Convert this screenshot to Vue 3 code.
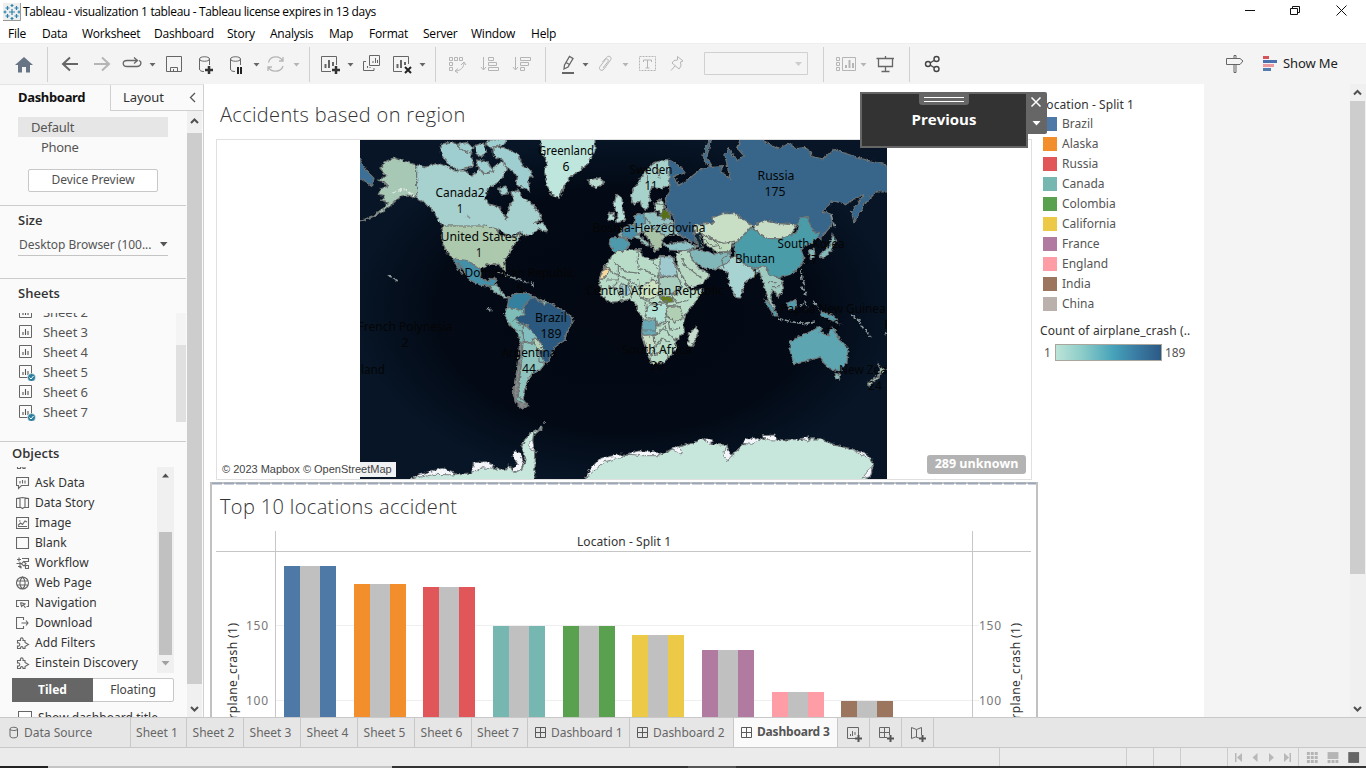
<script setup>
const menus = ['File', 'Data', 'Worksheet', 'Dashboard', 'Story', 'Analysis', 'Map', 'Format', 'Server', 'Window', 'Help']
const sheets = [
  { name: 'Sheet 2' }, { name: 'Sheet 3' }, { name: 'Sheet 4' },
  { name: 'Sheet 5', used: true }, { name: 'Sheet 6' }, { name: 'Sheet 7', used: true }
]
const objects = ['Extension', 'Ask Data', 'Data Story', 'Image', 'Blank', 'Workflow', 'Web Page', 'Navigation', 'Download', 'Add Filters', 'Einstein Discovery']
const puzzle = 'M1.500 12.500V10C4.500 11 4.500 6 1.500 7V4.500H4.500C3.500 1 8 1 7 4.500H9V6.500L12.500 8.500 9 10.500V12.500H7C7.500 10 4 10 4.500 12.500Z'
const objectPaths = {
  'Extension': puzzle,
  'Ask Data': 'M.5 1.500H12.500V9.500H5.500L2.500 12.500V9.500H.5Z M4 7.500V5 M6.500 7.500V4 M9 7.500V4.500',
  'Data Story': 'M.5 2.500L6.500 1.500 12.500 2.500V11.500H8L6.500 12.500 5 11.500H.5Z M4 2V11 M9 2V11',
  'Image': 'M.5 1.500H12.500V12.500H.5Z M2 9.500L4.500 7 6.500 8.500 9 5 11 6 M3 5H4.500 M2 10.500H11',
  'Blank': 'M.5 1.500H12.500V12.500H.5Z',
  'Workflow': 'M1 3.500H5 M3 1.500V5.500 M6 2.500H12.500V5.500H8 M.5 7.500H5.500 M2 10.500H5V12.500 M4 6V12 M7.500 5.500L5.500 8 8 10 10 7.500Z M9.500 9.500H12.500V12.500H9.500Z',
  'Web Page': 'M6.500 1A6 6 0 1 0 6.500 13 6 6 0 1 0 6.500 1Z M6.500 1C3 4 3 10 6.500 13 10 10 10 4 6.500 1 M1 5H12 M1 9H12',
  'Navigation': 'M3 10.500H.5V4.500H12.500V10.500H10.500 M4.500 6.500L9 8 7.500 9 9.500 12 M4.500 6.500L5.500 10.500 7 9',
  'Download': 'M7.500 4V1.500H.5V12.500H7.500V10 M5.500 7H12 M10 4.500L12 7 10 9.500',
  'Add Filters': puzzle,
  'Einstein Discovery': puzzle
}
const legend = [
  ['Brazil', 'c1'], ['Alaska', 'c2'], ['Russia', 'c3'], ['Canada', 'c4'], ['Colombia', 'c5'],
  ['California', 'c6'], ['France', 'c7'], ['England', 'c8'], ['India', 'c9'], ['China', 'c10']
]
const bars = [
  { x: 284, y: 566, c: '#4e79a7' }, { x: 354, y: 584, c: '#f28e2b' }, { x: 423, y: 587, c: '#e15759' },
  { x: 493, y: 626, c: '#76b7b2' }, { x: 563, y: 626, c: '#59a14f' }, { x: 632, y: 635, c: '#edc948' },
  { x: 702, y: 650, c: '#b07aa1' }, { x: 772, y: 692, c: '#ff9da7' }, { x: 841, y: 701, c: '#9c755f' }
]
const tabs = ['Sheet 1', 'Sheet 2', 'Sheet 3', 'Sheet 4', 'Sheet 5', 'Sheet 6', 'Sheet 7']

// [text, centre x, baseline y, width]
const mapLabels = [
  ['Greenland', 566, 155, 56], ['6', 566, 171, 7], ['Canada2', 460, 197, 49], ['1', 460, 213, 6],
  ['United States', 479, 241, 77], ['1', 479, 257, 6], ['Dominican Republic', 520, 277, 111], ['5', 520, 293, 7],
  ['Sweden', 651, 174, 43], ['11', 651, 190, 13], ['Russia', 776, 180, 37], ['175', 775, 196, 21],
  ['Bosnia-Herzegovina', 649, 232, 113], ['1', 649, 248, 6], ['South Korea', 811, 248, 67], ['17', 811, 264, 14],
  ['Bhutan', 755, 263, 40], ['1', 755, 278, 6], ['Central African Republic', 655, 295, 138], ['3', 655, 311, 7],
  ['Papua New Guinea', 833, 313, 105], ['20', 833, 329, 14], ['French Polynesia', 405, 331, 95], ['2', 405, 347, 7],
  ['Brazil', 551, 322, 32], ['189', 551, 338, 21], ['Argentina', 529, 357, 55], ['44', 529, 373, 14],
  ['South Africa', 657, 354, 70], ['20', 657, 370, 14], ['New Zealand', 875, 374, 72], ['24', 875, 390, 14],
  ['land', 373, 374, 24], ['Fiji', 893, 329, 18]
]
// Land shapes, drawn on a grid of three units per pixel: [outline, fill]
const land = [
  // North America
  ['M75 100L90 80 118 68 150 80 185 90 185 190 160 180 142 182 125 195 105 213 80 232 50 247 18 258 52 242 85 220 103 203 80 196 90 182 70 178 78 160 98 154 85 140 68 135 95 122Z', '#a7c8b4'],
  ['M185 90L212 96 250 85 280 97 300 108 330 108 350 123 375 102 400 118 418 94 438 80 456 95 448 121 430 142 400 160 390 190 400 206 430 215 444 236 454 254 462 216 476 196 468 174 490 164 505 192 520 196 540 216 553 235 560 254 540 265 570 267 575 290 550 282 530 300 510 302 495 290 475 306 450 296 430 285 400 276 268 273 250 258 240 235 213 205 185 190Z', '#a6d1ce'],
  ['M262 273H395L425 282 438 305 450 300 480 306 500 292 490 315 472 335 465 355 450 374 446 386 452 408 440 400 432 388 400 388 377 401 357 394 335 378 300 375 275 350 262 320Z', '#acc9ad'],
  ['M295 372L335 376 357 390 374 401 378 425 395 440 418 427 426 437 408 455 375 450 343 436 326 405 308 384 324 418 309 400Z', '#4590a9'],
  ['M404 452L424 449 438 470 462 489 448 489 420 473Z', '#8bbfba'],
  ['M258 28L290 20 312 34 346 48 356 94 312 107 285 91 260 62Z', '#9eced0'],
  ['M305 28L335 22 354 37 350 55 325 47Z', '#9eced0'],
  ['M360 32L385 24 395 50 382 65 363 58Z', '#9eced0'],
  ['M405 12H455L450 26 412 40 392 28Z', '#9eced0'],
  ['M414 35L450 38 489 58 505 93 528 105 534 125 520 130 524 170 500 156 483 151 488 125 465 103 450 93 443 75 415 62Z', '#9eced0'],
  ['M365 75L398 80 415 109 385 116 367 94Z', '#9eced0'],
  ['M430 160L455 155 463 175 440 180Z', '#9eced0'],
  ['M555 0H720V48L700 85 665 113 642 128 626 157 612 190 591 180 576 151 569 112 576 82 560 50Z', '#bfe6dc'],
  ['M700 135L736 128 746 145 725 158 705 152Z', '#b9d9cf'],
  ['M5 56L35 108 57 130 50 151 30 138 5 128Z', '#3d6f96'],
  // South America
  ['M455 520L463 490 485 472 520 476 560 495 582 508 605 515 650 545 654 560 635 590 630 615 600 635 590 660 570 685 555 705 530 717 515 745 507 770 505 795 520 812 500 820 482 804 475 775 480 735 490 685 496 625 489 595 462 567 448 537Z', '#7fbdb9'],
  ['M460 492L485 472 520 476 555 494 560 510 510 510 500 530 480 520 458 518Z', '#357f9f'],
  ['M510 510L528 487 562 500 568 512 580 502 605 515 650 545 654 560 635 590 630 615 600 635 577 686 560 667 551 648 556 620 530 596 516 570 490 566 484 547 507 536Z', '#2a587e'],
  ['M505 565L530 590 548 612 532 625 505 619Z', '#83bfc0'],
  ['M532 612L550 614 568 645 555 650 538 632Z', '#b2d2b5'],
  ['M504 622L535 625 551 648 552 680 570 685 555 705 530 717 515 745 507 770 505 795 490 785 493 735 500 680Z', '#8fc4bf'],
  ['M498 620L502 660 492 730 487 795 520 813 497 818 480 800 478 750 490 690 493 625Z', '#858a8c'],
  // Africa
  ['M733 431L745 400 770 364 790 346 855 344 862 363 890 375 917 364 955 375 970 405 990 440 1003 465 1045 462 1020 502 992 540 985 565 988 591 960 618 965 637 940 670 920 686 890 685 880 665 860 605 862 575 866 555 845 520 842 502 820 493 790 500 760 502 738 480Z', '#b8dcc7'],
  ['M733 431L747 398H765L757 417 742 433Z', '#f6d79d'],
  ['M915 365H953L968 423H915Z', '#9ecad0'],
  ['M915 425H968L982 455 965 480 915 475Z', '#a9cebf'],
  ['M855 460L893 432 912 450 910 480 885 493 855 487Z', '#cee3c0'],
  ['M913 482L952 486 955 500 930 503 915 490Z', '#667d1e'],
  ['M800 445L820 455 828 475 805 487 795 468Z', '#9ac7ce'],
  ['M880 510L936 507 932 558 904 571 900 550 870 548Z', '#b3e1d6'],
  ['M863 555H902L904 600H860Z', '#68a9b5'],
  ['M936 517L975 515 985 550 958 561 935 544Z', '#b1d0b3'],
  ['M862 604L898 602 900 640 890 660 879 650Z', '#c8ddc3'],
  ['M1000 600L1024 575 1029 595 1011 635 998 632Z', '#c5dbcc'],
  // Europe
  ['M765 309L805 307 828 327 805 349 777 350 763 330Z', '#5099ad'],
  ['M785 178L801 190 803 228 812 255 782 261 790 232 775 215Z M762 235L778 232 775 257 760 255Z', '#b4ded7'],
  ['M830 198L830 170 857 132 876 102 902 82 936 73 948 95 942 150 917 161 890 157 881 178 886 196 874 226 859 213 855 197 838 209Z', '#a7d2cc'],
  ['M790 300L803 279 836 269 842 242 870 235 900 231 914 246 949 252 963 286 981 306 955 299 929 305 915 322 889 305 865 291 850 299 876 320 895 334 875 332 850 310 826 307 814 314Z', '#93c2c3'],
  ['M798 292L815 275 838 271 848 300 828 312 805 308Z', '#488faa'],
  ['M838 242L865 235 872 265 842 276Z', '#5b9fb4'],
  ['M900 205L920 192 929 215 922 234 901 227Z', '#b7d9c7'],
  ['M912 237L935 221 948 245 925 255Z', '#547018'],
  ['M865 290L890 280 928 300 918 338 900 350 893 331Z', '#a8c3a5'],
  ['M925 327L988 320 1028 334 1000 348 943 345Z', '#8dc2c7'],
  // Asia
  ['M940 73L975 94 990 113 958 122 970 151 995 137 1016 120 1035 105 1070 94 1105 92 1095 109 1125 130 1110 61 1120 39 1143 75 1168 63 1145 39 1162 0H1190L1270 42 1298 24 1325 41 1355 37 1372 65 1405 72 1435 43 1495 63 1535 75 1610 94V171L1565 170 1535 200 1497 262 1489 229 1528 177 1490 197 1470 207 1436 198 1404 229 1429 238 1430 270 1397 311 1378 302 1347 247 1325 270 1265 265 1236 255 1195 271 1180 265 1140 236 1106 235 1075 245 1075 265 1020 270 1015 300 1028 329 985 305 960 286 958 251 935 219 931 190 945 170Z', '#37658a'],
  ['M1065 5L1044 60 1050 83 1072 94 1055 66 1070 10Z', '#3c6e91'],
  ['M1018 270L1075 265V247L1106 235 1140 236 1192 272 1170 295 1155 320 1107 327 1075 315 1045 300 1022 300Z', '#c8dfc6'],
  ['M1195 271L1236 255 1265 265 1325 270 1305 305 1275 312 1235 310 1202 286Z', '#c7ddc6'],
  ['M1137 330L1170 295 1188 277 1205 290 1235 310 1275 312 1325 292 1335 250 1355 245 1375 290 1397 294 1370 325 1337 340 1347 370 1340 390 1315 415 1275 428 1240 420 1235 396 1195 400 1165 385 1140 360Z', '#4b9ca9'],
  ['M1040 297L1075 315 1107 325 1137 319 1126 350 1085 351 1047 325Z', '#bfdbbe'],
  ['M1003 344L1040 345 1080 356 1125 351 1129 379 1085 405 1045 399 1010 374Z', '#82b7ba'],
  ['M960 354L1000 345 1012 375 1037 405 1067 416 1045 444 1009 459 990 440 970 400Z', '#b9d9c5'],
  ['M1083 400L1115 385 1141 359 1165 385 1195 400 1235 395 1230 420 1210 411 1195 425 1171 440 1157 489 1143 488 1124 449 1116 411Z', '#a7d4d3'],
  ['M1210 399L1232 393 1242 420 1275 430 1286 460 1270 486 1258 470 1250 464 1246 488 1260 520 1249 524 1233 472Z', '#9fcac0'],
  ['M1015 298L1037 291 1035 311 1045 338 1031 341 1028 319Z', '#0a2636'],
  ['M1390 360L1420 340 1434 299 1442 315 1430 346 1402 370Z M1360 345L1377 342 1380 365 1366 372Z', '#84b9bb'],
  ['M1227 495L1240 498 1270 543 1258 543Z M1296 505L1323 493 1325 518 1302 525Z M1395 527L1436 542 1455 567 1424 554 1400 543Z', '#529dad'],
  // Oceania
  ['M1305 620L1340 600 1365 590 1387 575 1402 580 1395 592 1420 602 1430 575 1445 596 1454 613 1480 640 1476 681 1455 707 1430 704 1407 685 1395 667 1365 675 1317 686 1305 647Z', '#5ca5b1'],
  ['M1440 715L1457 719 1453 735 1443 732Z', '#84b8ba'],
  ['M1565 681L1582 702 1592 704 1575 716 1568 731 1539 756 1538 745 1567 724 1575 702Z', '#a5c8bd'],
  // Antarctica
  ['M165 1045V1032L240 1012 280 1018 350 1014 355 985 395 985 418 1000 450 1005 462 990 477 1012 500 1002 513 975 500 931 524 897 563 878 535 902 532 925 542 955 538 1045Z M695 1045V1032L705 1010 732 975 795 962 855 956 916 959 960 938 1015 924 1040 910 1077 928 1116 930 1122 965 1145 948 1168 925 1230 910 1297 915 1355 912 1395 911 1445 932 1500 944 1542 967 1555 985 1549 1014 1535 1032V1045Z', '#c7e6dc']
]
const borders = 'M748 400L820 435 850 455 M775 378L810 410 855 415 M850 345L846 375 850 400 870 405 905 425 M892 375L910 405V475 M790 440L775 455 M755 435L790 435 V390 M760 455L785 460 800 500 M820 440L835 470 825 495 M850 430L856 485 890 505 935 500 M870 500L875 530 M980 455L950 480 965 505 1000 495 M935 510L980 515 M910 575L940 560 945 585 975 580 M905 600L930 575 940 595 960 618 M900 640L920 610 945 620 M885 665L925 645 942 668 M860 585H905 M876 102L878 140 M905 85L912 130 M900 205L930 210 M870 245L895 280 M950 265L915 270 890 285 M975 360L990 390 1040 430 M1010 375L1035 390 M1045 310L1075 335 1095 330 M1060 300L1100 340 M1128 350L1100 375 1107 400 M1165 390L1205 404 M1242 440L1265 440 M1250 455L1275 455 M465 565L480 550 M485 585L500 590'
const islands = 'M430 413L465 425 503 438 535 447 M537 445V465 M335 240L345 250 M1270 551L1310 560 1350 566 1382 558 M1335 515L1350 500 1355 520 M1375 500L1390 515 M1490 540L1510 555 1525 580 M1533 585L1545 605 M1590 600L1596 592 M1338 400L1340 430 1350 455 M1340 455L1355 475 1345 480 M395 520L410 525 M98 418L125 438 M535 890L560 877 M565 865L572 862 M1428 240L1440 280 M1597 12L1590 28'
const relief = 'M115 175L135 163 155 166 180 185'
const iceShelves = 'M165 1032L190 1020 240 1005 262 1000 295 1010 300 1020 240 1018Z M350 1008L358 983 392 980 415 990 410 1002 380 998 360 1010Z M470 960L482 948 497 955 505 980 500 1000 485 1012 470 1005 490 985Z M518 930L533 915 538 950 528 945Z M690 1032L705 1002 735 970 800 957 805 966 750 980 712 1012Z M815 957L850 948 910 950 915 962 860 962Z M950 940L975 938 982 957 965 950Z M1050 910L1075 920 1060 926Z M1104 960L1115 938 1132 962 1118 980Z M1163 925L1175 912 1205 908 1215 915 1190 928Z M1222 902L1260 900 1265 915 1235 914Z M1335 912L1360 905 1362 918Z M1480 942L1535 957 1545 970 1520 960Z M1545 1000L1555 990 1545 1025 1520 1032Z'
</script>

<template>
  <div class="app">
    <header class="titlebar">
      <svg class="logo" width="18" height="18" viewBox="0 0 18 18">
        <path d="M0 0H17V17H0Z" fill="#eee" /><path d="M17.500 0V17.500H0" stroke="#999" fill="none" />
        <path d="M9 6V12 M6 9H12 M9 1V4 M7.500 2.500H10.500 M9 14V17 M7.500 15.500H10.500 M4.500 3V7 M2.500 5H6.500 M13.500 3V7 M11.500 5H15.500 M4.500 11V15 M2.500 13H6.500 M13.500 11V15 M11.500 13H15.500 M2 7.500V10.500 M.5 9H3.500 M16 7.500V10.500 M14.500 9H17" stroke="#2d83ac" stroke-width="1.200" />
      </svg>
      <span class="apptitle">Tableau - visualization 1 tableau - Tableau license expires in 13 days</span>
      <svg class="wincontrols" width="138" height="22" viewBox="1228 0 138 22" fill="none" stroke="#111">
        <path d="M1245 10.500H1255 M1290.500 8.500H1297.500V14.500H1290.500Z M1292.500 8V6.500H1299.500V12.500H1298 M1336.500 5.500L1346.500 15.500 M1346.500 5.500L1336.500 15.500" />
      </svg>
    </header>

    <nav class="menubar"><span v-for="m in menus" :key="m">{{ m }}</span></nav>

    <div class="toolbar">
      <svg width="47" height="41" viewBox="0 43 47 41">
        <path d="M15 65L24 57 33 65H30V72.500H26V67H22V72.500H18V65Z" fill="#667484" />
      </svg>
      <i class="sep"></i>
      <svg width="261" height="41" viewBox="48 43 261 41" class="ic">
        <path class="w2" d="M63 64H78 M70 57.500L63 64 70 70.500" />
        <path class="w2 off" d="M94 64H109 M102 57.500L109 64 102 70.500" />
        <path d="M131 66.500H127C122 66.500 122 60.500 127 60.500H137.500 M134 57.500L137.500 60.500 134 63.500 M139 60.500C142 61.500 141.500 66.500 137 66.500H131" stroke-width="1.300" />
        <path class="tri" d="M149.500 63H155.500L152.500 66.500Z" />
        <path d="M166.500 56.500H181.500V71.500H166.500Z M170.500 71.500V67.500H177.500V71.500 M173.500 71.500V69" />
        <path d="M199.500 59V69C199.500 70.500 201 71.500 204 71.500 M199.500 59C199.500 56 209.500 56 209.500 59 209.500 62 199.500 62 199.500 59 M209.500 59V65" /><path class="w3" d="M209 66V74 M205 70H213" />
        <path d="M230.500 59V69C230.500 70.500 232 71.500 235 71.500 M230.500 59C230.500 56 240.500 56 240.500 59 240.500 62 230.500 62 230.500 59 M240.500 59V65" /><path class="w2 dark" d="M238 67V74 M241 67V74" />
        <path class="tri" d="M253.500 63H259.500L256.500 66.500Z" />
        <path class="off" d="M268.500 62.500C270 55.500 280 55 282.500 61 M279 61H283V57 M283 66C281 72.500 271 73 268.500 67 M272 67H268V71" stroke-width="1.300" />
        <path class="tri tri-off" d="M293.500 63H299.500L296.500 66.500Z" />
      </svg>
      <i class="sep"></i>
      <svg width="125" height="41" viewBox="310 43 125 41" class="ic">
        <path d="M331 71.500H321.500V56.500H336.500V65" /><path class="w2" d="M325.500 68V64 M329 68V60 M333 66V62" /><path class="w3" d="M336 66V74 M332 70H340" />
        <path class="tri" d="M347.500 63H353.500L350.500 66.500Z" />
        <path d="M369.500 55.500H379.500V65.500H369.500Z M366 61.500H363.500V70.500H374V68 M367.500 68V66 M370 68V67 M373 63V61 M375.500 63V58 M377.500 63V60" />
        <path d="M402 71.500H393.500V56.500H408.500V64" /><path class="w2" d="M397.500 68V64 M401 68V60 M405 65V62" /><path class="w2 dark" d="M405 67L411 73 M411 67L405 73" />
        <path class="tri" d="M419.500 63H425.500L422.500 66.500Z" />
      </svg>
      <i class="sep"></i>
      <svg width="109" height="41" viewBox="436 43 109 41" class="ic off">
        <path d="M449.500 57.500H452.500V60.500H449.500Z M454.500 57.500H457.500V60.500H454.500Z M459.500 57.500H462.500V60.500H459.500Z M449.500 62.500H452.500V65.500H449.500Z M449.500 67.500H452.500V70.500H449.500Z M464 62.500C464 67 461 71 455 71 M461 65L464 62 466 65 M458 68.500L455 71 458 73" />
        <path d="M483.500 57V69 M481 67L483.500 70 486 67 M488.500 57.500H493.500V60.500H488.500Z M488.500 62.500H496.500V65.500H488.500Z M488.500 67.500H498.500V70.500H488.500Z" />
        <path d="M515.500 57V69 M513 67L515.500 70 518 67 M520.500 57.500H530.500V60.500H520.500Z M520.500 62.500H528.500V65.500H520.500Z M520.500 67.500H524.500V70.500H520.500Z" />
      </svg>
      <i class="sep"></i>
      <svg width="277" height="41" viewBox="546 43 277 41" class="ic">
        <path d="M564.500 65L569.500 56.500 573 58.500 568 67 564 69Z M566 62.500L569.500 64.500" stroke-width="1.300" /><path class="w2" d="M562 73H574" />
        <path class="tri" d="M582.500 63H588.500L585.500 66.500Z" />
        <path class="off" d="M602.500 62L606.500 57.500C609 54.500 612.500 57.500 610.500 60L604 69C602 72 598 69.500 600 66.500L605.500 59.500C607 58 609 59.500 608 61.500L603 68" />
        <path class="tri tri-off" d="M622.500 63H628.500L625.500 66.500Z" />
        <path class="off" d="M639.500 56.500H655.500V70.500H639.500Z" stroke-dasharray="2 1" /><path class="off" d="M643.500 62V60H651.500V62 M647.500 60V68 M645.500 68H649.500" />
        <path class="off" d="M677.500 56.500L683 61 680.500 62 681 66 679 69 672 63 674 60.500 677.500 60Z M675 66L671 70.500" />
        <path d="M704.500 52.500H807.500V74.500H704.500Z" stroke="#d0d0d0" /><path class="tri tri-off2" d="M795 62H802L798.500 66Z" />
      </svg>
      <i class="sep"></i>
      <svg width="85" height="41" viewBox="824 43 85 41" class="ic">
        <path class="off" d="M836.500 57.500H839.500V60.500H836.500Z M836.500 62.500H839.500V65.500H836.500Z M836.500 67.500H839.500V70.500H836.500Z M842.500 57.500H855.500V70.500H842.500Z" /><path class="off w2" d="M846 68V65 M849.500 68V60 M853 68V63" />
        <path class="tri tri-off" d="M860.500 63H866.500L863.500 66.500Z" />
        <path d="M876.500 58.500H894 M878.500 58V66.500H892.500V58 M885.500 67V71 M881.500 71.500H889.500 M885.500 58V56" stroke-width="1.300" />
      </svg>
      <i class="sep"></i>
      <svg width="45" height="41" viewBox="910 43 45 41" class="ic sh">
        <circle cx="928" cy="64" r="2.500" /><circle cx="936.500" cy="59" r="2.500" /><circle cx="936.500" cy="69" r="2.500" /><path d="M930 63L934 60.500 M930 65L934 67.500" />
      </svg>
      <span class="grow"></span>
      <svg width="58" height="41" viewBox="1224 43 58 41" class="ic guide">
        <path d="M1226.500 58.500H1240L1243 61 1240 64.500H1226.500Z M1234 64.500V72.500H1236V64.500 M1234 58V55.500H1236V58" />
        <path stroke="#d4545c" stroke-width="3" d="M1263 57.500H1269" /><path stroke="#4c6fae" stroke-width="3" d="M1263 61.500H1277" /><path stroke="#ec9a9f" stroke-width="3" d="M1263 65.500H1274" /><path stroke="#527dac" stroke-width="3" d="M1263 69.500H1271" />
      </svg>
      <span class="showme">Show Me</span>
    </div>

    <main class="main">
      <aside class="sidebar">
        <div class="sidetabs"><b>Dashboard</b><span>Layout</span><svg width="17" height="26"><path d="M10 8L5.500 12.500 10 17" fill="none" stroke="#555" stroke-width="1.300" /></svg></div>
        <div class="sidemain">
          <div class="sidecol">
            <div class="devices">
              <div class="device sel">Default</div>
              <div class="device sub">Phone</div>
              <div class="preview">Device Preview</div>
            </div>
            <div class="size">
              <h3>Size</h3>
              <div class="select"><span>Desktop Browser (100...</span><svg width="8" height="5"><path d="M0 0H7.500L3.700 4.500Z" fill="#555" /></svg></div>
            </div>
            <div class="sheets">
              <h3>Sheets</h3>
              <div class="sheetbox">
                <div class="sheetlist">
                  <div v-for="s in sheets" :key="s.name" class="sheet">
                    <svg width="18" height="18" viewBox="0 0 18 18"><path d="M1.500 2.500H13.500V14.500H1.500Z" fill="none" stroke="#666" /><path d="M5 12V9 M7.500 12V6 M10 12V8" stroke="#555" stroke-width="1.100" />
                      <g v-if="s.used"><circle cx="13.500" cy="14.500" r="4" fill="#2e7e9f" stroke="#fafafa" stroke-width=".6" /><path d="M11.500 14.500L13 16 15.500 13" fill="none" stroke="#fff" /></g></svg>
                    <span>{{ s.name }}</span>
                  </div>
                </div>
                <div class="sheetscroll"></div>
              </div>
            </div>
            <div class="objects">
              <h3>Objects</h3>
              <div class="objbox">
                <div class="objlist">
                  <div v-for="o in objects" :key="o" class="object">
                    <svg width="14" height="14" viewBox="0 0 14 14"><path :d="objectPaths[o]" fill="none" stroke="#666" stroke-width="1.100" /></svg><span>{{ o }}</span>
                  </div>
                </div>
                <div class="objscroll"><svg width="17" height="16"><path d="M5 10.500H12L8.500 6.500Z" fill="#505050" /></svg><i></i><svg width="17" height="17"><path d="M4.500 6H12.500L8.500 10.500Z" fill="#a0a0a0" /></svg></div>
              </div>
              <div class="toggle"><b>Tiled</b><span>Floating</span></div>
              <div class="check"><i></i><span>Show dashboard title</span></div>
            </div>
          </div>
          <div class="sidescroll">
            <svg width="15" height="22"><path d="M4 12L7.500 8.500 11 12" fill="none" stroke="#505050" stroke-width="2" /></svg><i></i>
            <svg width="15" height="33"><path d="M4 23L7.500 26.500 11 23" fill="none" stroke="#505050" stroke-width="2" /></svg>
          </div>
        </div>
      </aside>

      <section class="dash">
        <div class="views">
          <h2>Accidents based on region</h2>
          <div class="mapview">
            <svg class="map" width="527" height="339" viewBox="15 15 1581 1017">
              <defs>
                <filter id="coast" x="0" y="0" width="100%" height="100%"><feTurbulence type="fractalNoise" baseFrequency=".09" numOctaves="3" seed="4" /><feDisplacementMap in="SourceGraphic" scale="13" xChannelSelector="R" yChannelSelector="G" /></filter>
                <radialGradient id="sea"><stop offset="0" stop-color="#030812" /><stop offset=".7" stop-color="#030a16" /><stop offset="1" stop-color="#071526" /></radialGradient>
              </defs>
              <path d="M0 0H1620V1050H0Z" fill="url(#sea)" />
              <g filter="url(#coast)">
                <path v-for="(l, i) in land" :key="i" :d="l[0]" :fill="l[1]" stroke="#707473" stroke-width="3.500" />
                <path :d="borders" class="borders" />
                <path :d="islands" class="islands" />
                <path :d="relief" class="relief" />
                <path :d="iceShelves" class="ice" />
              </g>
              <g transform="translate(-1065 -405) scale(3)" class="maplabels">
                <text v-for="(t, i) in mapLabels" :key="i" :x="t[1]" :y="t[2]" :textLength="t[3]" lengthAdjust="spacingAndGlyphs">{{ t[0] }}</text>
              </g>
            </svg>
            <span class="credit">© 2023 Mapbox © OpenStreetMap</span>
            <span class="unknown">289 unknown</span>
          </div>
          <div class="chart">
            <svg width="828" height="235" viewBox="210 482 828 235">
              <path d="M211 720V483H1037V720" fill="none" stroke="#c1c1c1" stroke-width="2" /><path d="M212 483.500H1036" stroke="#9da6b8" stroke-width="2" stroke-dasharray="10 2" />
              <path d="M276 625.500H979 M276 700.500H979" stroke="#efefef" />
              <g v-for="b in bars" :key="b.x"><rect :x="b.x" :y="b.y" width="52" height="160" :fill="b.c" /><rect :x="b.x + 16" :y="b.y" width="20" height="160" fill="#c0c0c0" /></g>
              <path d="M216 551.500H1031 M275.500 531V717 M972.500 531V717" stroke="#c6c6c6" fill="none" />
              <text x="220" y="514" class="ctitle" textLength="237">Top 10 locations accident</text>
              <text x="577" y="546" class="chead" textLength="94">Location - Split 1</text>
              <g class="axis"><text x="246" y="630" textLength="22">150</text><text x="246" y="705" textLength="22">100</text><text x="979" y="630" textLength="22">150</text><text x="979" y="705" textLength="22">100</text></g>
              <g class="chead"><text transform="translate(237 785) rotate(-90)" textLength="162">Count of airplane_crash (1)</text><text transform="translate(1020 785) rotate(-90)" textLength="162">Count of airplane_crash (1)</text></g>
            </svg>
          </div>
        </div>
        <div class="legends">
          <h4>Location - Split 1</h4>
          <div v-for="l in legend" :key="l[0]" class="key"><i :class="l[1]"></i>{{ l[0] }}</div>
          <h4 class="count">Count of airplane_crash (..</h4>
          <div class="ramp"><span>1</span><i></i><span>189</span></div>
        </div>
        <div class="previous">
          <div class="prevbtn"><svg class="grip" width="50" height="12"><path d="M0 0H50V9Q50 12 47 12H3Q0 12 0 9Z" fill="#666" /><path d="M5 4.500H45 M5 8.500H45" stroke="#fff" /></svg>Previous</div>
          <svg width="19" height="42"><path d="M0 0H17Q19 0 19 2V40Q19 42 17 42H0Z" fill="#666" /><path d="M3.500 5.500L12.500 14.500 M12.500 5.500L3.500 14.500" stroke="#fff" stroke-width="1.500" /><path d="M4.500 29H12.500L8.500 33.500Z" fill="#fff" /></svg>
        </div>
      </section>
      <div class="canvas"></div>
      <div class="mainscroll"><svg width="15" height="17"><path d="M4 10.500L7.500 7 11 10.500" fill="none" stroke="#505050" stroke-width="2" /></svg><i></i><span class="grow"></span><svg width="15" height="20"><path d="M4 10L7.500 13.500 11 10" fill="none" stroke="#505050" stroke-width="2" /></svg></div>
    </main>

    <footer class="tabs">
      <div class="tab source"><svg width="10" height="13"><path d="M1 3V10C1 12.500 8.500 12.500 8.500 10V3 M1 3C1 .7 8.500 .7 8.500 3 8.500 5 1 5 1 3" fill="none" stroke="#666" /></svg>Data Source</div>
      <div v-for="t in tabs" :key="t" class="tab sheettab">{{ t }}</div>
      <div v-for="n in 3" :key="n" class="tab dtab" :class="{ active: n === 3 }"><svg width="12" height="12"><path d="M.5 .5H10.500V10.500H.5Z M5.500 .5V10.500 M.5 5.500H10.500" fill="none" stroke="#5a5a5a" /></svg>Dashboard {{ n }}</div>
      <div class="tab add"><svg width="16" height="16"><path d="M8 11.500H.5V.5H11.500V8 M3.500 9V7 M5.500 9V4 M8 8V5" fill="none" stroke="#666" /><path d="M11.500 8V15 M8 11.500H15" stroke="#555" stroke-width="2" /></svg></div>
      <div class="tab add"><svg width="16" height="16"><path d="M8 10.500H.5V.5H10.500V8 M5.500 .5V10.500 M.5 5.500H10.500" fill="none" stroke="#666" /><path d="M11.500 8V15 M8 11.500H15" stroke="#555" stroke-width="2" /></svg></div>
      <div class="tab add"><svg width="16" height="16"><path d="M8 11L4.500 10 .5 11.500V.5L5.500 2.500 10.500 .5V8 M5.500 2.500V10" fill="none" stroke="#666" /><path d="M11.500 8V15 M8 11.500H15" stroke="#555" stroke-width="2" /></svg></div>
    </footer>
    <div class="status">
      <i></i><i></i><i></i><i></i>
      <svg width="70" height="19" viewBox="1228 748 70 19" fill="#b8b8b8"><path d="M1235 753H1236.500V762H1235Z M1242 753V762L1237 757.500Z M1257.500 753V762L1252.500 757.500Z M1269 753V762L1274 757.500Z M1284 753V762L1289 757.500Z M1289.500 753H1291V762H1289.500Z" /></svg>
      <svg class="viewmodes" width="67" height="19" viewBox="1299 748 67 19"><path d="M1307 753.500H1318 M1307 757.500H1318 M1307 761.500H1318" stroke="#b4b4b4" stroke-width="3" stroke-dasharray="3 1" /><path d="M1328 752H1339V759H1328Z" fill="#b4b4b4" /><path d="M1328 761.500H1339" stroke="#b4b4b4" stroke-width="3" stroke-dasharray="3 1" /><path d="M1349 752H1360V763H1349Z" fill="#666" /></svg>
    </div>
    <div class="taskedge"></div>
  </div>
</template>

<style>
html, body { background: #fff; overflow: hidden; }
</style>
<style scoped>
* { box-sizing: border-box; }
.app { width: 1366px; height: 768px; display: flex; flex-direction: column; overflow: hidden; font: 12px "Noto Sans", sans-serif; color: #333; background: #fff; }
svg { display: block; flex: none; }
h2, h3, h4 { margin: 0; }
.grow { flex: 1; }
.titlebar { height: 23px; display: flex; padding-left: 3px; flex: none; }
.logo { margin-top: 3px; }
.apptitle { margin-left: 2px; line-height: 23px; color: #000; font-family: "Open Sans", sans-serif; letter-spacing: -.355px; white-space: nowrap; }
.wincontrols { margin-left: auto; }
.menubar { height: 20px; flex: none; display: grid; grid-template-columns: 34px 40px 72px 73px 43px 59px 40px 54px 48px 60px 40px; padding-left: 8px; line-height: 21px; color: #000; font-family: "Open Sans", sans-serif; letter-spacing: -.22px; }
.toolbar { height: 41px; flex: none; background: #f4f4f4; display: flex; align-items: stretch; border-top: 1px solid #eee; }
.toolbar svg { margin-top: -1px; }
.sep { width: 1px; height: 35px; margin-top: 3px; background: #d0d0d0; flex: none; }
.ic { fill: none; stroke: #666; }
.ic .w2, .w2 { stroke-width: 2; }
.ic .w3 { stroke-width: 2.5; stroke: #333; }
.ic .dark { stroke: #222; }
.ic .off, .off path { stroke: #b5b5b5; }
.ic .tri { fill: #666; stroke: none; }
.ic .tri-off { fill: #b5b5b5; }
.ic .tri-off2 { fill: #ccc; }
.sh { stroke: #444; stroke-width: 1.400; }
.showme { font-size: 13px; line-height: 39px; width: 84px; padding-left: 1px; color: #222; letter-spacing: -.1px; }
.main { height: 633px; flex: none; display: flex; }
.sidebar { width: 204px; background: #fafafa; border-right: 1px solid #d0d0d0; border-top: 1px solid #e4e4e4; flex: none; }
.sidetabs { display: flex; height: 26px; font-size: 13px; line-height: 25px; }
.sidetabs b { width: 110px; padding-left: 18px; color: #111; letter-spacing: -.33px; }
.sidetabs span { width: 75px; border-left: 1px solid #d0d0d0; border-bottom: 1px solid #d0d0d0; padding-left: 12px; letter-spacing: -.1px; }
.sidetabs svg { border-bottom: 1px solid #d0d0d0; width: 18px; }
.sidemain { display: flex; height: 606px; }
.sidecol { width: 187px; overflow: hidden; }
.sidecol h3 { font-size: 13px; font-weight: 600; line-height: 18px; font-family: "Open Sans", sans-serif; }
.devices { height: 95px; padding: 6px 18px 0 18px; border-bottom: 1px solid #ccc; margin-right: 1px; }
.device { height: 20px; line-height: 20px; padding-left: 13px; font-size: 13px; color: #555; letter-spacing: -.2px; }
.device.sel { background: #e6e6e6; }
.device.sub { padding-left: 23px; letter-spacing: -.3px; }
.preview { margin: 12px 10px 0 10px; height: 23px; border: 1px solid #c8c8c8; border-radius: 2px; background: #fff; text-align: center; line-height: 20px; color: #505050; letter-spacing: -.05px; }
.size { height: 73px; padding: 5px 18px 0; border-bottom: 1px solid #ccc; margin-right: 1px; }
.select { display: flex; align-items: center; justify-content: space-between; height: 22px; margin-top: 5px; border-bottom: 1px solid #c4c4c4; padding-left: 1px; color: #555; white-space: nowrap; letter-spacing: -.03px; }
.sheets { height: 163px; border-bottom: 1px solid #ccc; padding: 5px 0 0 18px; margin-right: 1px; }
.sheetbox { height: 109px; display: flex; margin-top: 11px; overflow: hidden; justify-content: space-between; }
.sheetlist { margin-top: -11px; }
.sheet { height: 20px; display: flex; gap: 7px; align-items: center; line-height: 20px; font-size: 13px; color: #555; letter-spacing: -.05px; }
.sheetscroll { width: 10px; border-top: 32px solid #f4f4f4; background: #e0e0e0; }
.objects { padding: 2px 0 0 12px; }
.objbox { display: flex; height: 206px; margin-top: 5px; }
.objlist { width: 145px; overflow: hidden; }
.object { height: 20px; display: flex; gap: 5px; align-items: center; padding-left: 4px; position: relative; top: -14px; white-space: nowrap; color: #333; line-height: 20px; letter-spacing: .05px; }
.object:first-child span { visibility: hidden; }
.objscroll { width: 17px; background: #f0f0f0; display: flex; flex-direction: column; }
.objscroll i { width: 13px; height: 123px; margin: 49px 0 0 2px; background: #c1c1c1; }
.toggle { display: flex; width: 162px; height: 24px; margin-top: 5px; line-height: 22px; text-align: center; border: 1px solid #c8c8c8; border-radius: 2px; background: #fff; color: #444; }
.toggle b { width: 81px; background: #666; color: #fff; margin: -1px 0 -1px -1px; line-height: 24px; }
.toggle span { flex: 1; }
.check { display: flex; margin: 9px 0 0 6px; gap: 6px; line-height: 14px; white-space: nowrap; letter-spacing: .05px; }
.check i { width: 14px; height: 14px; border: 1px solid #666; background: #fff; }
.sidescroll { width: 15px; background: #f0f0f0; }
.sidescroll i { display: block; height: 551px; background: #cdcdcd; }
.dash { width: 1000px; position: relative; display: flex; background: #fff; flex: none; overflow: hidden; }
.views { width: 834px; padding-left: 6px; }
.views h2 { height: 55px; padding: 17px 0 0 10px; font: 300 20px/28px "Open Sans", sans-serif; color: #333; letter-spacing: .33px; }
.mapview { margin-left: 6px; width: 816px; height: 341px; border: 1px solid #e0e0e0; display: flex; position: relative; }
.map { margin: 0 0 0 143px; }
.borders { fill: none; stroke: #6f7774; stroke-width: 3.500; }
.islands { fill: none; stroke: #8a9798; stroke-width: 5; stroke-dasharray: 15 5; }
.relief { fill: none; stroke: #dfe9e2; stroke-width: 4; stroke-dasharray: 12 5; }
.ice { fill: #f4f5f8; stroke: #6f7477; stroke-width: 2.5; }
.maplabels text { font: 12px "Noto Sans", sans-serif; fill: #050505; text-anchor: middle; }
.credit { position: absolute; left: 0; bottom: 2px; height: 15px; padding: 0 4px 0 5px; background: rgba(255,255,255,.94); font: 11px/15px "Liberation Sans", sans-serif; color: #444; white-space: nowrap; letter-spacing: 0; }
.unknown { position: absolute; right: 5px; bottom: 5px; width: 99px; height: 19px; border-radius: 3px; background: #b3b3b3; color: #fff; font: 700 12.500px/18px "Open Sans", sans-serif; text-align: center; }
.chart { height: 235px; margin-top: 2px; }
.ctitle { font: 300 20px "Open Sans", sans-serif; fill: #333; }
.chead { font: 12px "Noto Sans", sans-serif; fill: #333; }
.axis { font: 12px "Noto Sans", sans-serif; fill: #777; }
.legends { padding: 12px 0 0 2px; width: 166px; }
.legends h4 { font-weight: 400; font-size: 12px; line-height: 17px; white-space: nowrap; letter-spacing: .07px; }
.key { display: flex; align-items: center; height: 20px; line-height: 20px; color: #555; gap: 5px; padding-left: 3px; margin-top: 0; position: relative; top: 1px; }
.key i { width: 14px; height: 14px; }
.c1 { background: #4e79a7; } .c2 { background: #f28e2b; } .c3 { background: #e15759; } .c4 { background: #76b7b2; } .c5 { background: #59a14f; }
.c6 { background: #edc948; } .c7 { background: #b07aa1; } .c8 { background: #ff9da7; } .c9 { background: #9c755f; } .c10 { background: #bab0ac; }
.legends .count { margin-top: 9px; letter-spacing: .14px; }
.ramp { display: flex; align-items: center; padding-left: 4px; height: 17px; margin-top: 5px; color: #555; }
.ramp i { width: 107px; height: 17px; border: 1px solid #aaa69e; background: linear-gradient(90deg, #bce4d8, #8cccc9 25%, #45a2b9 55%, #3b7ea5 75%, #2c5985); margin: 0 3px 0 4px; }
.previous { position: absolute; left: 656px; top: 8px; display: flex; }
.prevbtn { width: 168px; height: 56px; border: 2px solid #666; background: #333; color: #fff; font: 700 15px/51px "Open Sans", sans-serif; text-align: center; }
.grip { position: absolute; left: 59px; top: 1px; }
.canvas { width: 146px; background: #f4f4f4; }
.mainscroll { width: 16px; display: flex; flex-direction: column; background: #f0f0f0; }
.mainscroll i { width: 15px; height: 473px; background: #cdcdcd; }
.tabs { height: 31px; flex: none; display: flex; background: #e6e6e6; border-top: 1px solid #c8c8c8; border-bottom: 1px solid #c8c8c8; }
.tab { width: 57px; border-right: 1px solid #c8c8c8; text-align: center; line-height: 30px; color: #666; white-space: nowrap; }
.source { width: 131px; display: flex; gap: 5px; padding-left: 9px; }
.source svg { margin-top: 8px; }
.sheettab { padding-right: 3px; }
.source + .tab, .sheettab:nth-child(8) { width: 56px; }
.dtab { width: 102px; display: flex; gap: 4px; padding-left: 7px; letter-spacing: -.05px; }
.dtab:nth-child(10) { width: 104px; }
.dtab svg { margin-top: 9px; }
.dtab.active { width: 104px; background: #fafafa; font-weight: 700; line-height: 28px; color: #555; letter-spacing: -.2px; }
.add { width: 32px; padding: 9px 0 0 9px; }
.status { height: 18px; flex: none; background: #ebebeb; display: flex; padding-left: 999px; }
.status i { border-left: 1px solid #ccc; width: 27px; }
.status i:first-child { width: 127px; }
.status i:nth-child(4) { width: 48px; border-right: 1px solid #ccc; }
.viewmodes { border-left: 1px solid #ccc; }
.taskedge { height: 2px; flex: none; background: linear-gradient(90deg, #222 0 48px, #c4c4c4 48px 392px, #333 392px 688px, #555 688px 736px, #333 736px); }
</style>
